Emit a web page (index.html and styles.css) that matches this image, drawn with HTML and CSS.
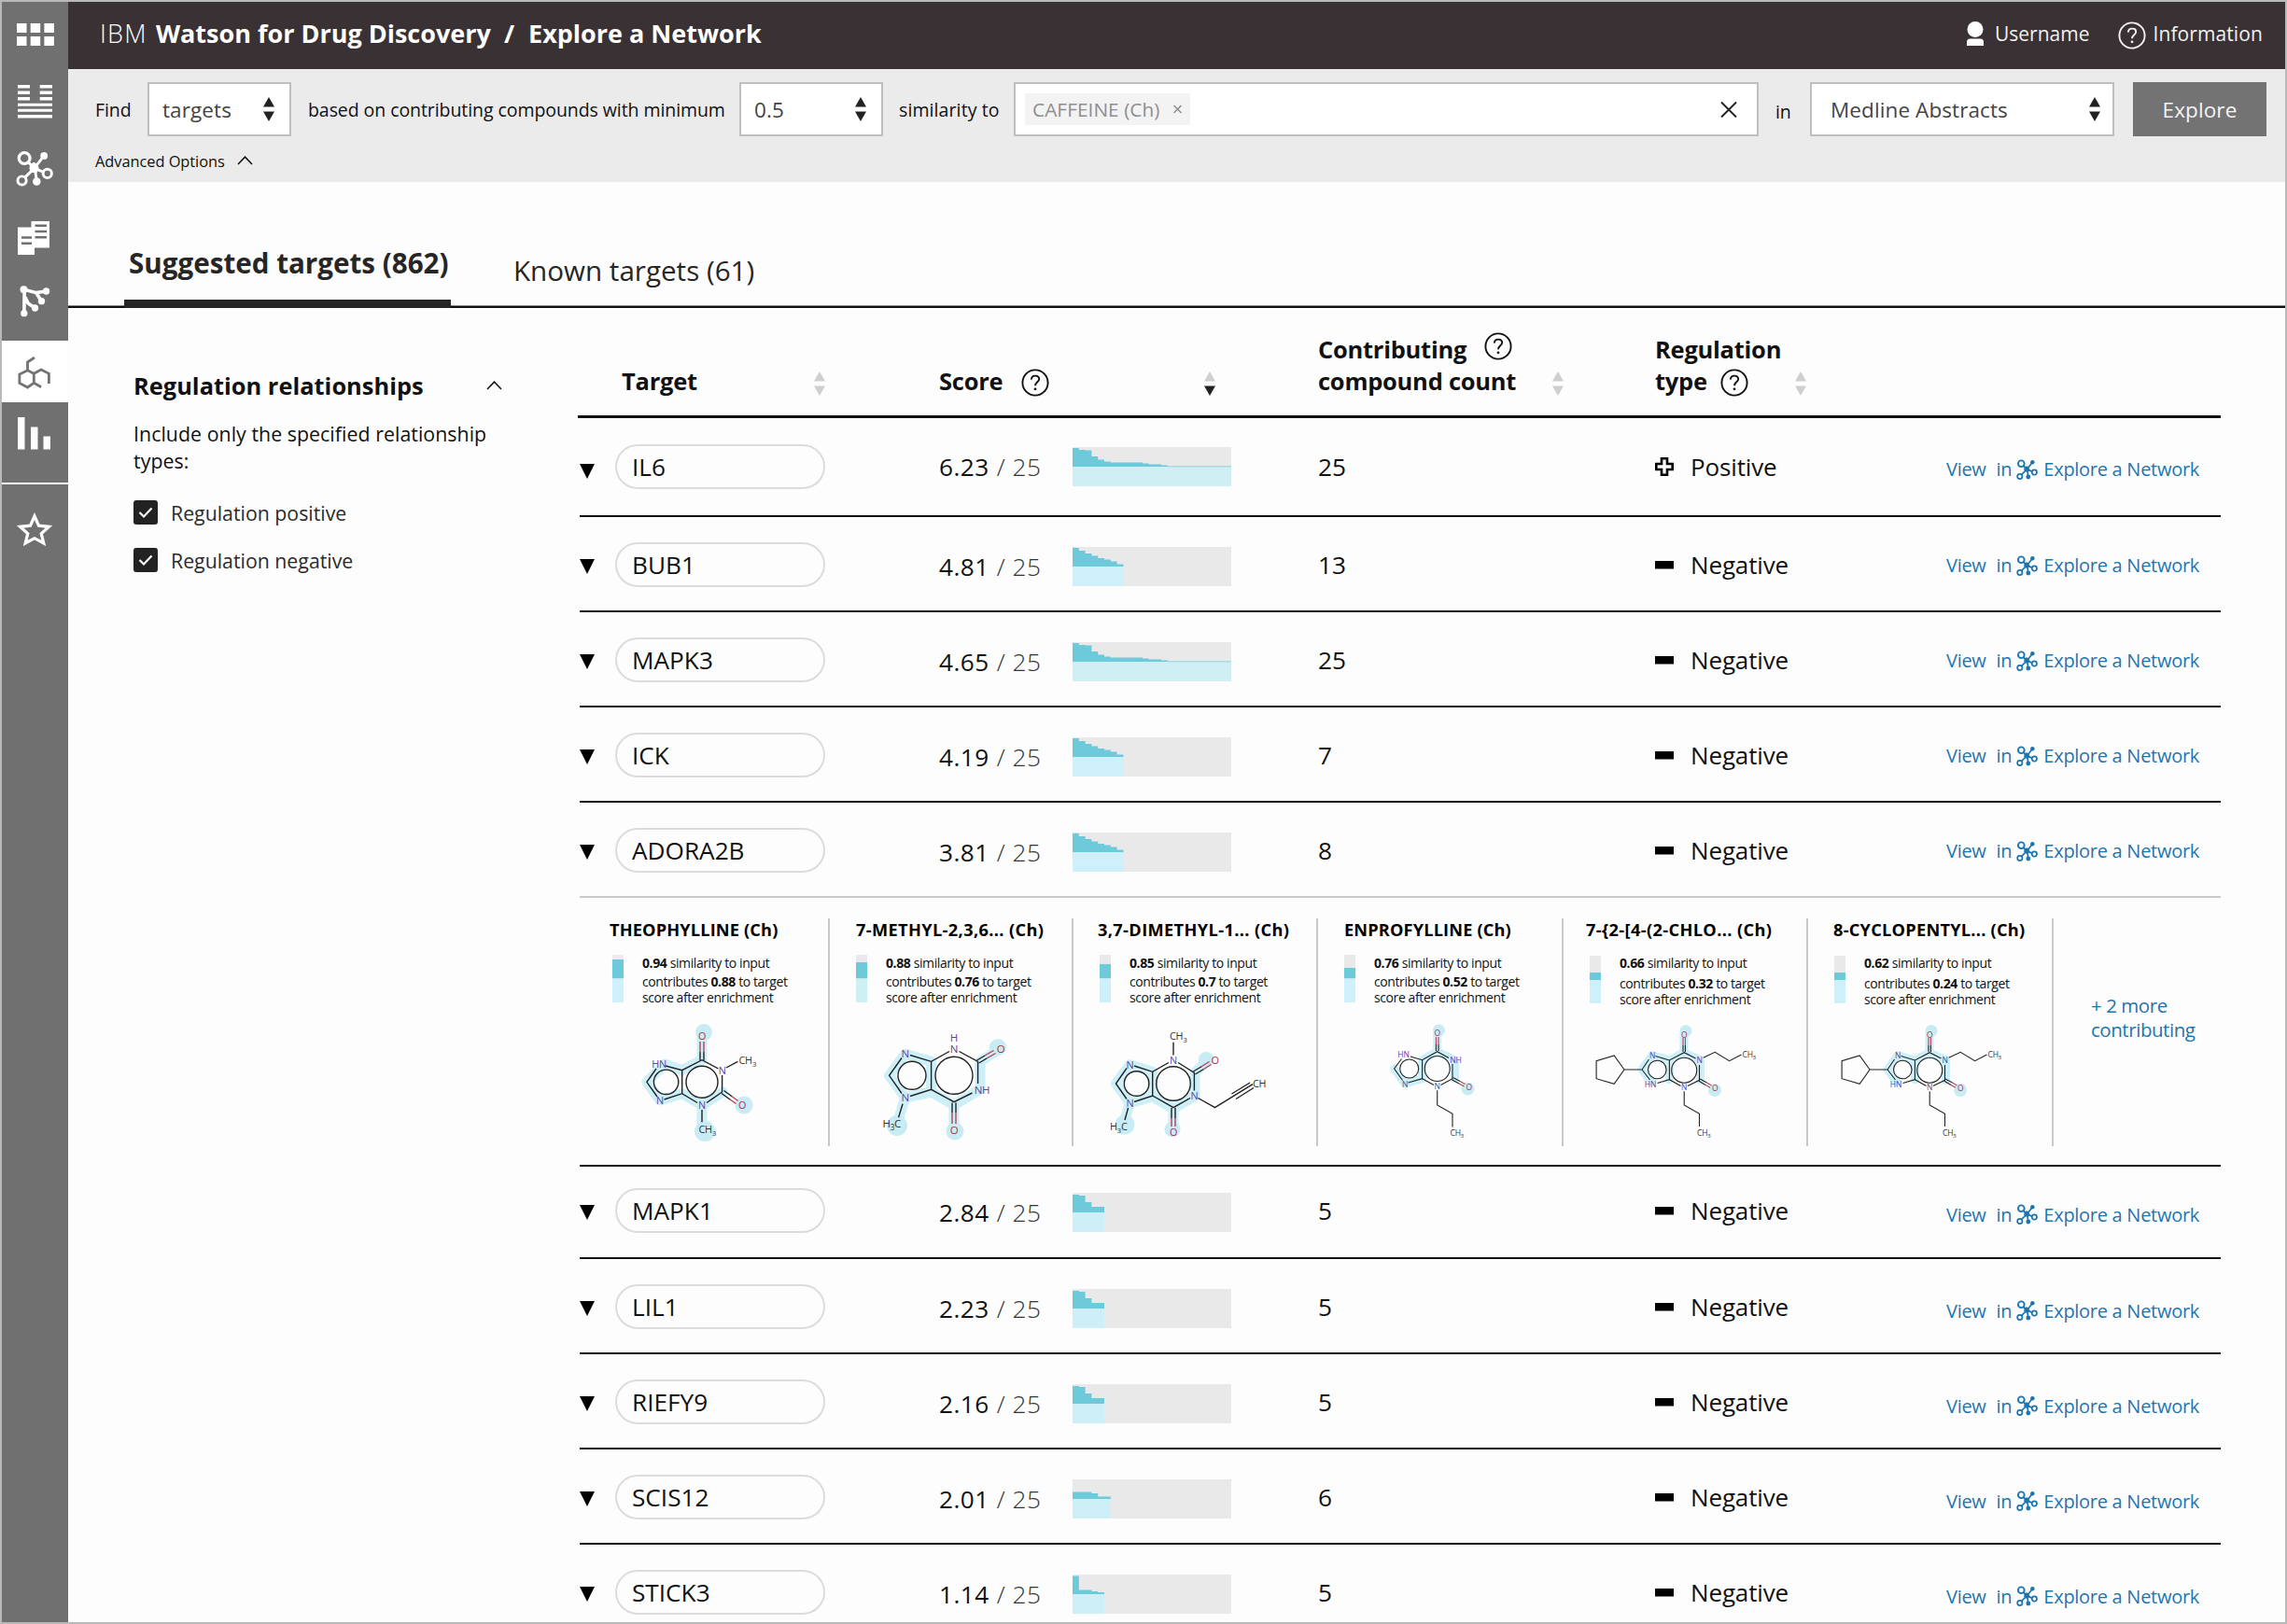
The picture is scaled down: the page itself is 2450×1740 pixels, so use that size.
FILE: index.html
```html
<!DOCTYPE html>
<html lang="en">
<head>
<meta charset="utf-8">
<title>IBM Watson for Drug Discovery / Explore a Network</title>
<link rel="stylesheet" href="styles.css">
</head>
<body>
<svg class="defs" width="0" height="0">
  <symbol id="network" viewBox="50 240 122 117">
    <g fill="none" stroke="currentColor" stroke-width="9">
      <path d="M78 265L110 298L142 257M110 298L152 315M110 298L70 337M112 298L118 340"/>
    </g>
    <path d="M96 284l14-6 12 8 4 14-8 12-16 0-8-12z" fill="currentColor"/>
    <circle cx="142" cy="257" r="12" fill="currentColor"/>
    <circle cx="118" cy="341" r="13" fill="currentColor"/>
    <g class="ring" stroke="currentColor">
      <circle cx="78" cy="265" r="18" stroke-width="10"/>
      <circle cx="153" cy="315" r="14" stroke-width="9"/>
      <circle cx="70" cy="338" r="14" stroke-width="9"/>
    </g>
  </symbol>
  <symbol id="sort" viewBox="0 0 12 26"><path class="up" d="M6 0L12 10.5H0z"/><path class="down" d="M0 15.5H12L6 26z"/></symbol>
  <symbol id="help" viewBox="0 0 30 30">
    <circle cx="15" cy="15" r="13.6" fill="none" stroke="currentColor" stroke-width="1.9"/>
    <path d="M10.8 11.6c.2-2.600 1.900-4 4.200-4s4.200 1.300 4.200 3.700c0 3-4.200 3.200-4.200 7" fill="none" stroke="currentColor" stroke-width="1.9"/>
    <circle cx="15" cy="21.800" r="1.400" fill="currentColor"/>
  </symbol>
  <symbol id="caret" viewBox="0 0 16 16"><path d="M0 0H16L8 16z"/></symbol>
  <symbol id="chevron" viewBox="0 0 17 10"><path d="M1 9L8.500 1.200L16 9" fill="none" stroke="currentColor" stroke-width="1.500"/></symbol>
  <symbol id="minus" viewBox="0 0 20 20"><path d="M0 6H20V14.500H0z"/></symbol>
  <symbol id="plus" viewBox="0 0 20 20"><path d="M7 1.300H13V7H18.700V13H13V18.700H7V13H1.300V7H7z" fill="none" stroke="#000" stroke-width="2.600"/></symbol>
  <symbol id="chart-25" viewBox="0 0 170 42">
    <path fill="#cfeff5" d="M0 21H170V42H0z"/>
    <path fill="#6ccadb" d="M0 21V1H6.800V3H13.600V3.500H20.400V10H27.200V13.500H34V15.500H40.800V16.500H74.800V17.500H81.600V18.500H95.200V19.500H102V21z"/>
    <path fill="#a9dbe0" d="M102 20H170V21.500H102z"/>
  </symbol>
  <symbol id="chart-8" viewBox="0 0 170 42">
    <path fill="#cdf0fa" d="M0 21H54.400V42H0z"/>
    <path fill="#6ccadb" d="M0 21V1H6.800V4H13.600V7H20.400V9.500H27.200V12H34V13.500H40.800V15.500H47.600V18.500H54.400V21z"/>
  </symbol>
  <symbol id="chart-5" viewBox="0 0 170 42">
    <path fill="#cfeff8" d="M0 21H34V42H0z"/>
    <path fill="#6ccadb" d="M0 21V2H6.800V3H13.600V10H20.400V15H34V21z"/>
  </symbol>
  <symbol id="chart-6" viewBox="0 0 170 42">
    <path fill="#cfeff8" d="M0 21H40.800V42H0z"/>
    <path fill="#6ccadb" d="M0 21V13.500H20.400V15H27.200V18.500H40.800V21z"/>
  </symbol>
  <symbol id="chart-5b" viewBox="0 0 170 42">
    <path fill="#cfeff8" d="M0 21H34V42H0z"/>
    <path fill="#6ccadb" d="M0 21V1.500H6.800V16.500H20.400V18H27.200V19H34V21z"/>
  </symbol>
</svg>

<div class="app">
  <nav class="rail">
    <div class="rail-item grid-item"><svg width="40" height="24" viewBox="0 0 40 24" fill="#fff"><path d="M0 0h10.500v10H0zM14.700 0h10.500v10H14.700zM29.400 0h10.500v10H29.400zM0 14h10.500v10H0zM14.700 14h10.500v10H14.700zM29.400 14h10.500v10H29.400z"/></svg></div>
    <div class="rail-item text-item"><svg width="37" height="36" viewBox="0 0 37 36" fill="#fff"><path d="M0 0h13v3.500H0zM0 6.500h13v3.500H0zM0 13h13v3.500H0zM23.700 0H37v3.500H23.700zM23.700 6.500H37v3.500H23.700zM23.700 13H37v3.500H23.700zM0 19.700h37v3H0zM0 25.700h37v3H0zM0 32h37v3.500H0z"/></svg></div>
    <div class="rail-item net-item"><svg class="net" width="40" height="39"><use href="#network"/></svg></div>
    <div class="rail-item docs-item"><svg width="34" height="36" viewBox="0 0 34 36"><path fill="#fff" d="M0 6.500H14.500V0H34V28.500H18V36H0z"/><path stroke="#707070" stroke-width="2.400" d="M18.500 4.800H31M18.500 11H31M18.500 17.200H31M4 17.500H15M4 23.800H15"/></svg></div>
    <div class="rail-item branch-item"><svg width="33" height="34" viewBox="65 675 98 102"><path fill="none" stroke="#fff" stroke-width="11" d="M79 764L80 688L118 698L150 693M118 698L135 725M82 712L92 732L114 747"/><g fill="#fff"><circle cx="78" cy="688" r="12"/><circle cx="150" cy="693" r="11"/><circle cx="135" cy="725" r="11"/><circle cx="114" cy="747" r="11"/><circle cx="79" cy="764" r="11"/></g></svg></div>
    <div class="rail-item active-item"><svg width="36" height="36" viewBox="19.500 380 36 36" fill="none" stroke="#737373" stroke-width="2.800"><path d="M37.500 382L30 387V395.700M30 395.700L36.800 399.300V409.300L30 414L21.400 409.500V400ZM36.800 399.300L44.600 395L52.900 399.300V410M36.800 409.300L44.600 413.700"/></svg></div>
    <div class="rail-item bars-item"><svg width="36" height="35" viewBox="0 0 36 35" fill="#fff"><path d="M0 0h7.500v34.500H0zM14 10.500h7.500v24H14zM27.500 20.500H35v14H27.500z"/></svg></div>
    <div class="rail-item star-item"><svg width="38" height="36" viewBox="0 0 38 36"><path d="M19 4L23.500 14.200L34.500 15.300L26.200 22.700L28.800 33L19 27.700L9.200 33L11.800 22.700L3.500 15.300L14.500 14.200Z" fill="none" stroke="#fff" stroke-width="3.200"/></svg></div>
  </nav>

  <div class="main">
    <header class="topbar">
      <h1><span class="light">IBM</span><span>Watson for Drug Discovery</span><span class="slash">/</span><span>Explore a Network</span></h1>
      <div class="user"><svg width="18" height="26" viewBox="0 0 18 26" fill="#fff"><ellipse cx="9" cy="8.500" rx="8.500" ry="8.500"/><path d="M0 26V22c0-2.500 1.500-3.500 3.500-3.500h11c2 0 3.500 1 3.500 3.500v4z"/></svg>Username</div>
      <div class="info"><svg width="30" height="30"><use href="#help"/></svg>Information</div>
    </header>

    <section class="filters">
      <div class="query">
        <span>Find</span>
        <div class="field w-targets">targets<svg class="sort dark"><use href="#sort"/></svg></div>
        <span class="based">based on contributing compounds with minimum</span>
        <div class="field w-min">0.5<svg class="sort dark"><use href="#sort"/></svg></div>
        <span class="sim">similarity to</span>
        <div class="field w-input"><span class="tag">CAFFEINE (Ch)<svg width="9" height="10" viewBox="0 0 9 10" stroke="#8c8c8c" stroke-width="1.500"><path d="M.5 1L8.500 9M8.500 1L.5 9"/></svg></span><svg class="clear" width="18" height="17" viewBox="0 0 18 17" stroke="#222" stroke-width="2"><path d="M1 .5L17 16.500M17 .5L1 16.500"/></svg></div>
        <span class="in">in</span>
        <div class="field w-source">Medline Abstracts<svg class="sort dark"><use href="#sort"/></svg></div>
        <div class="button">Explore</div>
      </div>
      <div class="advanced">Advanced Options<svg width="17" height="10"><use href="#chevron"/></svg></div>
    </section>

    <nav class="tabs">
      <div class="tab current">Suggested targets (862)</div>
      <div class="tab">Known targets (61)</div>
    </nav>

    <div class="content">
      <aside class="side">
        <h2>Regulation relationships<svg width="17" height="10"><use href="#chevron"/></svg></h2>
        <p>Include only the specified relationship types:</p>
        <div class="check"><i><svg width="26" height="26" viewBox="0 0 26 26"><path d="M6.500 13L11 17.500L19.500 8.500" fill="none" stroke="#fff" stroke-width="2.200"/></svg></i>Regulation positive</div>
        <div class="check"><i><svg width="26" height="26" viewBox="0 0 26 26"><path d="M6.500 13L11 17.500L19.500 8.500" fill="none" stroke="#fff" stroke-width="2.200"/></svg></i>Regulation negative</div>
      </aside>

      <div class="table">
        <div class="row head">
          <div></div>
          <div class="th target-th">Target<svg class="sort"><use href="#sort"/></svg></div>
          <div class="th score-th">Score<svg class="help"><use href="#help"/></svg><svg class="sort desc"><use href="#sort"/></svg></div>
          <div class="th count-th"><div><div class="line">Contributing<svg class="help raised"><use href="#help"/></svg></div><div class="line">compound count</div></div><svg class="sort"><use href="#sort"/></svg></div>
          <div class="th type-th"><div><div class="line">Regulation</div><div class="line">type<svg class="help low"><use href="#help"/></svg></div></div><svg class="sort"><use href="#sort"/></svg></div>
        </div>

        <div class="row first"><svg class="caret"><use href="#caret"/></svg><div class="pill">IL6</div><div class="score">6.23<span class="of">/ 25</span></div><svg class="chart"><use href="#chart-25"/></svg><div>25</div><div class="type"><svg><use href="#plus"/></svg>Positive</div><a class="link"><span>View</span><span>in</span><svg class="net"><use href="#network"/></svg><span>Explore a Network</span></a></div>
        <div class="row"><svg class="caret"><use href="#caret"/></svg><div class="pill">BUB1</div><div class="score">4.81<span class="of">/ 25</span></div><svg class="chart"><use href="#chart-8"/></svg><div>13</div><div class="type"><svg><use href="#minus"/></svg>Negative</div><a class="link"><span>View</span><span>in</span><svg class="net"><use href="#network"/></svg><span>Explore a Network</span></a></div>
        <div class="row"><svg class="caret"><use href="#caret"/></svg><div class="pill">MAPK3</div><div class="score">4.65<span class="of">/ 25</span></div><svg class="chart"><use href="#chart-25"/></svg><div>25</div><div class="type"><svg><use href="#minus"/></svg>Negative</div><a class="link"><span>View</span><span>in</span><svg class="net"><use href="#network"/></svg><span>Explore a Network</span></a></div>
        <div class="row"><svg class="caret"><use href="#caret"/></svg><div class="pill">ICK</div><div class="score">4.19<span class="of">/ 25</span></div><svg class="chart"><use href="#chart-8"/></svg><div>7</div><div class="type"><svg><use href="#minus"/></svg>Negative</div><a class="link"><span>View</span><span>in</span><svg class="net"><use href="#network"/></svg><span>Explore a Network</span></a></div>
        <div class="row open"><svg class="caret"><use href="#caret"/></svg><div class="pill">ADORA2B</div><div class="score">3.81<span class="of">/ 25</span></div><svg class="chart"><use href="#chart-8"/></svg><div>8</div><div class="type"><svg><use href="#minus"/></svg>Negative</div><a class="link"><span>View</span><span>in</span><svg class="net"><use href="#network"/></svg><span>Explore a Network</span></a></div>

        <div class="details">
          <div class="compound c1">
            <h3>THEOPHYLLINE (Ch)</h3>
            <div class="stats"><svg class="meter" viewBox="0 0 12 51"><path fill="#ececf0" d="M0 0h12v5H0z"/><path fill="#6ccadb" d="M0 5h12v20.500H0z"/><path fill="#cdf0fa" d="M0 25.500h12V51H0z"/></svg><p><span><b>0.94</b> similarity to input</span>contributes <b>0.88</b> to target<br>score after enrichment</p></div>
            <svg class="mol" viewBox="1 0 250 133">
              <path class="halo" d="M132 14V40.700L110.700 51.700L92 45L73 64.300L87 84L110.700 76.700L132 89L154.300 75M132 89V112"/>
              <circle class="spot" cx="134" cy="11" r="9"/><circle class="spot" cx="177" cy="89" r="9.500"/><circle class="spot" cx="135" cy="117" r="11"/>
              <path class="bond" d="M153.600 57V75L137 86.500M127 86.500L110.700 76.700L91.500 83M84 80L72.900 64.300L83 50M93 47L110.700 51.700L132 40.700L149.500 50M110.700 51.700V76.700M158 49L170.400 42.300M132 94V107.300"/>
              <path class="bond" d="M130 41V32M134 41V32M153 76.500L162 83M155.500 73.500L164.500 80"/>
              <path class="bond ox" d="M130 32V21M134 32V21M162 83L168.500 87.500M164.500 80L170.500 84.500"/>
              <circle class="bond" cx="132" cy="64.300" r="17"/><circle class="bond" cx="93.600" cy="64.300" r="13.200"/>
              <g class="atom"><text class="o" x="132" y="19">O</text><text class="o" x="175" y="93">O</text><text class="n" x="153.600" y="56">N</text><text class="n" x="132" y="93">N</text><text class="n" x="86" y="48.500">HN</text><text class="n" x="87" y="88">N</text><text class="l" x="171.500" y="44.500">CH<tspan dy="3" class="sub">3</tspan></text><text class="l" x="128.500" y="118.500">CH<tspan dy="3" class="sub">3</tspan></text></g>
            </svg>
          </div>
          <div class="compound c2">
            <h3>7-METHYL-2,3,6... (Ch)</h3>
            <div class="stats"><svg class="meter" viewBox="0 0 12 51"><path fill="#ece6f0" d="M0 0h12v8H0z"/><path fill="#6ccadb" d="M0 8h12v17.500H0z"/><path fill="#cdf0f4" d="M0 25.500h12V51H0z"/></svg><p><span><b>0.88</b> similarity to input</span>contributes <b>0.76</b> to target<br>score after enrichment</p></div>
            <svg class="mol" viewBox="0 0 250 133">
              <path class="halo" d="M180 30L161 42.300V72.300L133 89L108.600 75L80.700 81L63.600 57.300L80.700 34.300L108.600 42.300V72M133 87V114M80.700 81L73 106"/>
              <circle class="spot" cx="180" cy="27" r="9"/><circle class="spot" cx="134" cy="117" r="9.500"/><circle class="spot" cx="72" cy="111" r="11"/>
              <path class="bond" d="M86 35.500L108.600 42.300L128 31.500M138.500 31.500L158.600 42.300V66M152.500 76L133 85.700L108.600 72.300L86 79.500M77 76.500L63.600 57.300L77 38.500M108.600 42.300V72.300M78 87.700L73.600 102.300"/>
              <path class="bond" d="M131 86.500V97M135 86.500V97M157.600 41L166 36M159.600 44L168 39"/>
              <path class="bond ox" d="M131 97V109M135 97V109M166 36L175.500 30.500M168 39L177.500 33.500"/>
              <circle class="bond" cx="133" cy="57.300" r="20"/><circle class="bond" cx="88" cy="57.300" r="15"/>
              <g class="atom m"><text class="n" x="133" y="21">H</text><text class="n" x="133" y="33">N</text><text class="n" x="80.700" y="38">N</text><text class="n" x="80.700" y="85">N</text><text class="n" x="163" y="76.500">NH</text><text class="o" x="183" y="33">O</text><text class="o" x="133" y="119.700">O</text><text class="l" x="56.400" y="113">H<tspan dy="3" class="sub">3</tspan><tspan dy="-3">C</tspan></text></g>
            </svg>
          </div>
          <div class="compound c3">
            <h3>3,7-DIMETHYL-1... (Ch)</h3>
            <div class="stats"><svg class="meter" viewBox="0 0 12 51"><path fill="#e9e9e9" d="M0 0h12v10H0z"/><path fill="#6ccadb" d="M0 10h12v15.500H0z"/><path fill="#cdf0fa" d="M0 25.500h12V51H0z"/></svg><p><span><b>0.85</b> similarity to input</span>contributes <b>0.7</b> to target<br>score after enrichment</p></div>
            <svg class="mol" viewBox="1 0 250 133">
              <path class="halo" d="M146 40L131 54.300V79L108 93L85.700 80L61.400 86.700L46.400 66L61.400 45.700L85.700 53.300V79M108 92V115M61.400 86.700L55 108"/>
              <circle class="spot" cx="143" cy="40" r="8"/><circle class="spot" cx="107" cy="115" r="8.500"/><circle class="spot" cx="56" cy="110" r="10.500"/>
              <path class="bond" d="M66 47L85.700 53.300L103 43.500M113 43.500L130.400 54.300V73.500M126 81.500L108 91.700L85.700 79L66 85.500M58 82.500L46.400 66L58 49.500M85.700 53.300V79M59.600 92L56 105M108 21.700V35.500M134.500 81.500L152.500 91.700L193 66.700"/>
              <path class="bond" d="M170.500 77L190 65M175 82.500L194 70.500M106 92V103M110 92V103M129.400 53L138.500 47.500M131.400 56L140.500 50.500"/>
              <path class="bond ox" d="M106 103V112M110 103V112M138.500 47.500L146.500 42.500M140.500 50.500L148.500 45.500"/>
              <circle class="bond" cx="108" cy="66" r="18.300"/><circle class="bond" cx="68.600" cy="66" r="13.300"/>
              <g class="atom"><text class="l" x="104" y="19">CH<tspan dy="3" class="sub">3</tspan></text><text class="n" x="108" y="44.500">N</text><text class="n" x="130.400" y="83">N</text><text class="n" x="61.400" y="49.500">N</text><text class="n" x="61.400" y="90.500">N</text><text class="o" x="152.500" y="45">O</text><text class="o" x="108" y="121.500">O</text><text class="l" x="193" y="70">CH</text><text class="l" x="40" y="115.500">H<tspan dy="3" class="sub">3</tspan><tspan dy="-3">C</tspan></text></g>
            </svg>
          </div>
          <div class="compound c4">
            <h3>ENPROFYLLINE (Ch)</h3>
            <div class="stats"><svg class="meter" viewBox="0 0 12 51"><path fill="#e9e9e9" d="M0 0h12v14H0z"/><path fill="#6ccadb" d="M0 14h12v11.500H0z"/><path fill="#cdf0fa" d="M0 25.500h12V51H0z"/></svg><p><span><b>0.76</b> similarity to input</span>contributes <b>0.52</b> to target<br>score after enrichment</p></div>
            <svg class="mol" viewBox="1 0 250 133">
              <path class="halo s" d="M128.700 12V31.700L147.500 41V60.700M128.700 31.700L112.600 40.700V60.700L94 66L82.600 50"/>
              <circle class="spot" cx="130.500" cy="9" r="6.500"/><circle class="spot" cx="161.500" cy="71.500" r="7"/>
              <path class="bond s" d="M100 37L112.600 40.700L128.700 31.700L141 38.500M145 45V60.700L132.500 67.500M125 67.500L112.600 60.700L97.500 65M91.500 62.500L82.600 50L90.500 39.500M112.600 40.700V60.700M128.700 73.300V89L145 98.300V112.500"/>
              <path class="bond s" d="M127.400 31V24M130 31V24M144.400 61.800L152 66M145.600 59.500L153.500 63.700"/>
              <path class="bond ox s" d="M127.400 24V16M130 24V16M152 66L157.500 69M153.500 63.700L158.500 66.500"/>
              <circle class="bond s" cx="128.700" cy="50" r="13.500"/><circle class="bond s" cx="98.700" cy="50" r="10"/>
              <g class="atom s"><text class="o" x="128.700" y="15">O</text><text class="o" x="162.600" y="72.500">O</text><text class="n" x="148.500" y="43.500">NH</text><text class="n" x="128.700" y="72.300">N</text><text class="n" x="92.500" y="38">HN</text><text class="n" x="94" y="69.500">N</text><text class="l" x="142.500" y="121.500">CH<tspan dy="2" class="sub">3</tspan></text></g>
            </svg>
          </div>
          <div class="compound c5">
            <h3>7-{2-[4-(2-CHLO... (Ch)</h3>
            <div class="stats"><svg class="meter" viewBox="0 0 12 51"><path fill="#e9e9e9" d="M0 0h12v18H0z"/><path fill="#6ccadb" d="M0 18h12v8H0z"/><path fill="#cdf0fa" d="M0 26h12V51H0z"/></svg><p><span><b>0.66</b> similarity to input</span>contributes <b>0.32</b> to target<br>score after enrichment</p></div>
            <svg class="mol" viewBox="1 0 250 133">
              <path class="halo s" d="M130 13V32.700L147.500 41V62.300M130 32.700L114.400 41L96.200 35.700L85 51L95 64M114.400 41V61.700"/>
              <circle class="spot" cx="132" cy="9.500" r="6.500"/><circle class="spot" cx="163" cy="73" r="7"/>
              <path class="bond s" d="M66 51H85L92.500 40M99.500 36.500L114.400 41L130.200 32.700L142.500 39M146.500 46V62.300L134 68.500M126.500 68.500L114.400 61.700L101.500 65.500M93.500 62L85 51M114.400 41V61.700M66 51L55.200 36L36.100 41.700V60.700L55.200 66.300ZM150.700 38.300L163.200 32.300L178.600 41.700L191.500 35M130.200 74.300V89L146.500 98.300V112"/>
              <path class="bond s" d="M129 32V25M131.400 32V25M146 63.300L153 67.500M147 61L154.500 65"/>
              <path class="bond ox s" d="M129 25V17M131.400 25V17M153 67.500L158 70.300M154.500 65L159.500 68"/>
              <circle class="bond s" cx="130.200" cy="51.700" r="13.500"/><circle class="bond s" cx="101.300" cy="51" r="9.800"/>
              <g class="atom s"><text class="o" x="130.200" y="16.500">O</text><text class="o" x="163.200" y="73.500">O</text><text class="n" x="146.500" y="44">N</text><text class="n" x="130.200" y="73">N</text><text class="n" x="96" y="39">N</text><text class="n" x="94" y="69.500">HN</text><text class="l" x="192.500" y="38">CH<tspan dy="2" class="sub">3</tspan></text><text class="l" x="144" y="121.500">CH<tspan dy="2" class="sub">3</tspan></text></g>
            </svg>
          </div>
          <div class="compound c6">
            <h3>8-CYCLOPENTYL... (Ch)</h3>
            <div class="stats"><svg class="meter" viewBox="0 0 12 51"><path fill="#e9e9e9" d="M0 0h12v18H0z"/><path fill="#6ccadb" d="M0 18h12v8H0z"/><path fill="#cdf0fa" d="M0 26h12V51H0z"/></svg><p><span><b>0.62</b> similarity to input</span>contributes <b>0.24</b> to target<br>score after enrichment</p></div>
            <svg class="mol" viewBox="0 0 250 133">
              <path class="halo s" d="M130 13V32.700L147.500 41V62.300M130 32.700L114.400 41L96.200 35.700L85 51L95 64M114.400 41V61.700"/>
              <circle class="spot" cx="132" cy="9.500" r="6.500"/><circle class="spot" cx="163" cy="73" r="7"/>
              <path class="bond s" d="M66 51H85L92.500 40M99.500 36.500L114.400 41L130.200 32.700L142.500 39M146.500 46V62.300L134 68.500M126.500 68.500L114.400 61.700L101.500 65.500M93.500 62L85 51M114.400 41V61.700M66 51L55.200 36L36.100 41.700V60.700L55.200 66.300ZM150.700 38.300L163.200 32.300L178.600 41.700L191.500 35M130.200 74.300V89L146.500 98.300V112"/>
              <path class="bond s" d="M129 32V25M131.400 32V25M146 63.300L153 67.500M147 61L154.500 65"/>
              <path class="bond ox s" d="M129 25V17M131.400 25V17M153 67.500L158 70.300M154.500 65L159.500 68"/>
              <circle class="bond s" cx="130.200" cy="51.700" r="13.500"/><circle class="bond s" cx="101.300" cy="51" r="9.800"/>
              <g class="atom s"><text class="o" x="130.200" y="16.500">O</text><text class="o" x="163.200" y="73.500">O</text><text class="n" x="146.500" y="44">N</text><text class="n" x="130.200" y="73">N</text><text class="n" x="96" y="39">N</text><text class="n" x="94" y="69.500">HN</text><text class="l" x="192.500" y="38">CH<tspan dy="2" class="sub">3</tspan></text><text class="l" x="144" y="121.500">CH<tspan dy="2" class="sub">3</tspan></text></g>
            </svg>
          </div>
          <a class="compound more">+ 2 more<br>contributing</a>
        </div>

        <div class="row after"><svg class="caret"><use href="#caret"/></svg><div class="pill">MAPK1</div><div class="score">2.84<span class="of">/ 25</span></div><svg class="chart"><use href="#chart-5"/></svg><div>5</div><div class="type"><svg><use href="#minus"/></svg>Negative</div><a class="link low"><span>View</span><span>in</span><svg class="net"><use href="#network"/></svg><span>Explore a Network</span></a></div>
        <div class="row"><svg class="caret"><use href="#caret"/></svg><div class="pill">LIL1</div><div class="score">2.23<span class="of">/ 25</span></div><svg class="chart"><use href="#chart-5"/></svg><div>5</div><div class="type"><svg><use href="#minus"/></svg>Negative</div><a class="link low"><span>View</span><span>in</span><svg class="net"><use href="#network"/></svg><span>Explore a Network</span></a></div>
        <div class="row"><svg class="caret"><use href="#caret"/></svg><div class="pill">RIEFY9</div><div class="score">2.16<span class="of">/ 25</span></div><svg class="chart"><use href="#chart-5"/></svg><div>5</div><div class="type"><svg><use href="#minus"/></svg>Negative</div><a class="link low"><span>View</span><span>in</span><svg class="net"><use href="#network"/></svg><span>Explore a Network</span></a></div>
        <div class="row"><svg class="caret"><use href="#caret"/></svg><div class="pill">SCIS12</div><div class="score">2.01<span class="of">/ 25</span></div><svg class="chart"><use href="#chart-6"/></svg><div>6</div><div class="type"><svg><use href="#minus"/></svg>Negative</div><a class="link low"><span>View</span><span>in</span><svg class="net"><use href="#network"/></svg><span>Explore a Network</span></a></div>
        <div class="row last"><svg class="caret"><use href="#caret"/></svg><div class="pill">STICK3</div><div class="score">1.14<span class="of">/ 25</span></div><svg class="chart"><use href="#chart-5b"/></svg><div>5</div><div class="type"><svg><use href="#minus"/></svg>Negative</div><a class="link low"><span>View</span><span>in</span><svg class="net"><use href="#network"/></svg><span>Explore a Network</span></a></div>
      </div>
    </div>
  </div>
</div>
</body>
</html>
```
FILE: styles.css
```css
* { box-sizing: border-box; }
html, body { margin: 0; }
body { font-family: "Open Sans", "Noto Sans", sans-serif; color: #111; background: #fdfdfd; }
h1, h2, h3, p { margin: 0; font-size: inherit; }
svg { display: block; flex: none; }
.defs { position: absolute; }

.app { width: 2450px; height: 1740px; border: 2px solid #b9b9b9; display: flex; overflow: hidden; background: #fdfdfd; white-space: nowrap; }

/* Icon rail */
.rail { width: 71px; flex: none; background: #707070; display: flex; flex-direction: column; color: #fff; --ring: #707070; }
.rail-item { padding-left: 17px; }
.grid-item { padding-top: 23px; height: 89px; padding-left: 16px; }
.text-item { height: 70px; }
.net-item { height: 76px; padding-left: 15px; }
.docs-item { height: 69px; padding-left: 17px; }
.branch-item { height: 59px; padding-left: 19px; }
.active-item { height: 66px; background: #fff; padding: 16px 0 0 17px; }
.bars-item { height: 88px; padding: 15.500px 0 0 17px; border-bottom: 2px solid #fff; }
.star-item { padding: 30px 0 0 16px; }
.ring { fill: var(--ring); }

.main { flex: 1; min-width: 0; display: flex; flex-direction: column; }

/* Header */
.topbar { height: 72px; flex: none; background: #393133; color: #fff; display: flex; align-items: center; padding: 0 24px 6px 34px; }
.topbar h1 { display: flex; font-size: 27px; font-weight: 700; flex: 1; }
.topbar .light { font-weight: 300; letter-spacing: 1.300px; margin-right: 9px; }
.topbar .slash { margin: 0 15px 0 14px; }
.user, .info { display: flex; align-items: center; font-size: 21px; color: #f2f0f0; margin-top: 2px; }
.user { gap: 12px; }
.info { gap: 7px; margin-left: 31px; letter-spacing: .1px; }
.info svg { margin-top: 3px; }

/* Query builder */
.filters { height: 121px; flex: none; background: #ebebeb; padding: 14px 20px 0 29px; }
.query { display: flex; align-items: center; height: 58px; font-size: 19.500px; letter-spacing: -.07px; }
.query > span:first-child { width: 56px; }
.field { height: 58px; border: 2px solid #bfbfbf; background: #fff; display: flex; align-items: center; justify-content: space-between; font-size: 22.500px; color: #444; letter-spacing: .1px; }
.w-targets { width: 154px; padding: 0 16px 0 14px; }
.w-min { width: 154px; padding: 0 16px 0 14px; }
.w-input { width: 798px; padding: 0 21px 0 10px; }
.w-source { width: 326px; padding: 0 13px 0 20px; }
.based { margin-left: 18px; width: 462px; }
.sim { margin-left: 17px; width: 123px; letter-spacing: .1px; }
.in { margin: 5px 0 0 18px; width: 37px; }
.sort { width: 12px; height: 26px; fill: #cfcfcf; }
.down { fill: var(--down, inherit); }
.sort.dark { fill: #222; }
.tag { display: flex; align-items: center; gap: 15px; height: 34px; padding: 0 9px 0 8px; background: #f3f3f3; color: #8f8f8f; font-size: 20.800px; letter-spacing: .05px; }
.button { margin-left: auto; width: 143px; height: 58px; background: #737373; color: #f4f4f4; display: flex; align-items: center; justify-content: center; font-size: 22.500px; letter-spacing: .1px; }
.advanced { display: flex; align-items: center; gap: 13px; height: 24px; margin-top: 14px; font-size: 16.400px; letter-spacing: -.05px; }

/* Tabs */
.tabs { height: 135px; flex: none; display: flex; align-items: flex-end; padding-left: 60px; gap: 67px; box-shadow: inset 0 -2.500px #111; font-size: 29.600px; }
.tab { line-height: 40px; padding-bottom: 20px; color: #262626; }
.tab.current { width: 350px; padding: 0 0 19px 5px; border-bottom: 9px solid #262626; font-weight: 700; }

.content { display: flex; flex: 1; min-height: 0; }

/* Filter panel */
.side { width: 546px; flex: none; padding: 65px 0 0 70px; font-size: 21.300px; }
.side h2 { width: 395px; height: 36px; display: flex; align-items: center; justify-content: space-between; font-size: 25.400px; letter-spacing: .02px; }
.side p { width: 395px; margin: 19px 0 28px; line-height: 29px; white-space: normal; letter-spacing: .06px; }
.check { display: flex; align-items: center; gap: 14px; height: 26px; margin-bottom: 25px; color: #2b2b2b; }
.check i { width: 26px; height: 26px; background: #222; border-radius: 3px; }

/* Results table */
.table { width: 1760px; flex: none; }
.row { display: grid; grid-template-columns: 38px 347px 143px 263px 361px 312px 294px; align-items: center; height: 102px; padding: 2px 0 0; border-bottom: 2px solid #111; margin-left: 2px; font-size: 26.200px; }
.row.head { height: 118px; margin-left: 0; padding: 0 0 20px 2px; border-bottom: 3px solid #111; align-items: end; font-size: 25.500px; letter-spacing: -.25px; font-weight: 700; line-height: 34px; }
.row.first { height: 106px; padding-top: 0; }
.row.open { border-color: #c9c9c9; }
.row.after { height: 99px; padding: 0 0 3px; }
.row.last { border: 0; padding: 2px 0; }
.th { display: flex; align-items: flex-end; justify-content: space-between; }
.th .sort { margin-bottom: 1px; }
.th .sort.desc { --down: #222; }
.target-th { width: 225px; padding-left: 7px; }
.score-th { grid-column: 3 / 5; width: 296px; }
.score-th .help { margin: 0 auto 0 20px; }
.count-th { width: 263px; }
.type-th { width: 162px; }
.line { display: flex; align-items: center; height: 34px; }
.help { width: 30px; height: 30px; }
.line .help { margin-left: 19px; }
.line .help.raised { margin-bottom: 6px; }
.line .help.low { margin: 4px 0 0 14px; }

.caret { width: 16px; height: 16px; margin-top: 3px; fill: #000; }
.first .caret { margin-top: 9px; }
.pill { width: 225px; height: 48px; border: 2px solid #dcdcdc; border-radius: 24px; padding-left: 16px; line-height: 44px; }
.score { margin-top: 4px; letter-spacing: .5px; }
.of { font-weight: 300; margin-left: 8px; color: #333; }
.chart { width: 170px; height: 42px; margin-top: 4px; background: #e9e9e9; }
.first .score, .first .chart { margin-top: 0; }
.type { display: flex; align-items: center; gap: 18px; font-size: 26px; letter-spacing: -.15px; }
.type svg { width: 20px; height: 20px; }
.link { display: flex; align-items: center; font-size: 20px; letter-spacing: -.28px; color: #1d75b0; margin-top: 1px; --ring: #fdfdfd; }
.link.low { margin-top: 8px; }
.first .link { margin-top: 5px; }
.link span:nth-child(2) { margin: 0 5px 0 11px; }
.link svg { width: 23px; height: 22px; margin-right: 6px; }

/* Expanded compounds */
.details { display: grid; grid-template-columns: 266px 261px 262px 263px 262px 263px 181px; height: 288px; padding: 22px 0 20px; margin-left: 2px; border-bottom: 2px solid #111; }
.compound { border-left: 2px solid #c9c9c9; }
.compound.c1 { border-left: 0; }
.compound h3 { font-size: 18.200px; line-height: 24px; margin-left: 28px; letter-spacing: .15px; color: #000; }
.c1 h3 { margin-left: 32px; }
.c2 h3, .c3 h3 { letter-spacing: .37px; }
.c3 h3 { margin-left: 26px; }
.c5 h3 { margin-left: 24px; letter-spacing: .37px; }
.c6 h3 { margin-left: 27px; letter-spacing: .25px; }
.stats { display: flex; height: 52px; margin: 15px 0 20px 28px; }
.c1 .stats { margin-left: 35px; }
.meter { width: 12px; height: 51px; margin-right: 20px; }
.stats p { font-size: 14px; line-height: 17.200px; letter-spacing: -.4px; }
.stats span { display: block; margin-bottom: 3px; }
.c5 .meter, .c6 .meter { margin-top: 1px; }
.c5 .stats span, .c6 .stats span { margin-bottom: 5px; }
.mol { width: 250px; height: 133px; overflow: visible; }
.bond { fill: none; stroke: #222; stroke-width: 1.400; }
.bond.s { stroke-width: 1.100; }
.bond.ox { stroke: #b5405a; }
.halo { fill: none; stroke: #cdeff8; stroke-width: 11; stroke-linecap: round; stroke-linejoin: round; }
.halo.s { stroke-width: 9; }
.spot { fill: #c8ecf3; }
.atom { font-size: 10.800px; text-anchor: middle; letter-spacing: -.2px; fill: #333; }
.atom.m { font-size: 11.500px; }
.atom.s { font-size: 8.500px; }
.atom .l { text-anchor: start; }
.atom .n { fill: #5148a8; }
.atom .o { fill: #b03050; }
.atom .sub { font-size: 70%; }
.more { color: #1d75b0; font-size: 20.500px; line-height: 25.500px; padding: 81px 0 0 40px; letter-spacing: -.45px; }
```
